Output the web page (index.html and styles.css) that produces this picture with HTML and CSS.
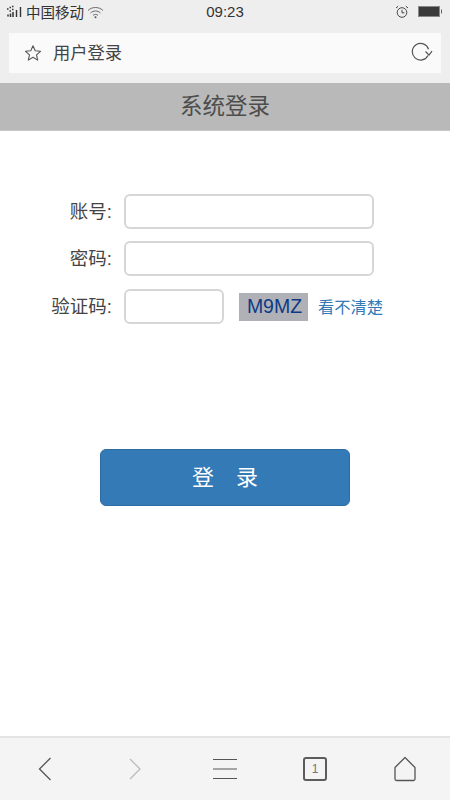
FILE: index.html
```html
<!DOCTYPE html>
<html>
<head>
    <meta charset="UTF-8" />
    <title>系统登录</title>
    <link rel="stylesheet" href="styles.css">
</head>
<body>
    <div class="browser-top">
        <div class="status-bar">
            <div class="status-left">
                <svg class="signal" width="17" height="14" viewBox="0 0 17 14">
                    <path d="M1 4h1.500M3.500 2.500h1.500M6 1.500h1.500M3.500 6h1.500M6 4.500h1.500M2 9.500v2M4.500 8.500v3.500M7 7v5" fill="none" stroke="#333" stroke-width="1.500"/>
                    <path d="M10.500 5v7M14.500 2v10" fill="none" stroke="#333" stroke-width="1.400"/>
                </svg>
                <span>中国移动</span>
                <svg class="wifi" width="17" height="14" viewBox="0 0 17 14">
                    <path d="M1 5.500C5 1.500 12 1.500 16 5.500M3.500 8C6.500 5.300 10.500 5.300 13.500 8M6 10.300c1.500-1.200 3.500-1.200 5 0" fill="none" stroke="#666" stroke-width="1"/>
                    <circle cx="8.500" cy="12.300" r="1" fill="#555"/>
                </svg>
            </div>
            <div class="status-time">09:23</div>
            <div class="status-right">
                <svg width="14" height="14" viewBox="0 0 14 14">
                    <circle cx="7" cy="7.500" r="4.800" fill="none" stroke="#444" stroke-width="1"/>
                    <path d="M7 4.800v3h2.400M1 3l2.200-1.800M13 3l-2.200-1.800" fill="none" stroke="#444" stroke-width="1"/>
                </svg>
                <svg width="25" height="12" viewBox="0 0 25 12">
                    <rect x="0.500" y="0.500" width="21" height="10" fill="#3a3a3a" stroke="#888"/>
                    <rect x="23" y="3.500" width="1" height="4" fill="#666"/>
                </svg>
            </div>
        </div>
        <div class="address-bar">
            <svg class="star" width="18" height="18" viewBox="0 0 18 18">
                <path d="M9 1.800l2.200 4.900 5.300.6-4 3.500 1.200 5.300L9 13.300l-4.700 2.800 1.200-5.300-4-3.500 5.300-.6z" fill="none" stroke="#555" stroke-width="1.100" stroke-linejoin="round"/>
            </svg>
            <span class="address-title">用户登录</span>
            <svg class="reload" width="22" height="20" viewBox="0 0 22 20">
                <path d="M17.500 7.200A8.300 8.300 0 1 0 17 13.500" fill="none" stroke="#555" stroke-width="1.200"/>
                <path d="M14.500 9.500l3.500 3.500 3-3.800" fill="none" stroke="#555" stroke-width="1.200"/>
            </svg>
        </div>
    </div>

    <div class="page-title">系统登录</div>

    <div class="content">
        <form class="login-form">
            <div class="form-row">
                <label class="form-label">账号:</label>
                <input class="form-input" type="text">
            </div>
            <div class="form-row">
                <label class="form-label">密码:</label>
                <input class="form-input" type="password">
            </div>
            <div class="form-row form-row-captcha">
                <label class="form-label">验证码:</label>
                <input class="form-input form-input-short" type="text">
                <span class="captcha">M9MZ</span>
                <a class="captcha-link" href="#">看不清楚</a>
            </div>
            <button class="login-button" type="button">登&ensp;&ensp;录</button>
        </form>
    </div>

    <div class="toolbar">
        <svg width="14" height="26" viewBox="0 0 14 26">
            <path d="M12.500 2L1.500 13l11 11" fill="none" stroke="#555" stroke-width="1.300"/>
        </svg>
        <svg width="14" height="26" viewBox="0 0 14 26">
            <path d="M2 3l10 10L2 23" fill="none" stroke="#bbb" stroke-width="1.300"/>
        </svg>
        <svg width="24" height="22" viewBox="0 0 24 22">
            <path d="M0 1.500h24M0 11h24M0 20.500h24" fill="none" stroke="#555" stroke-width="1.200"/>
        </svg>
        <div class="tab-count">1</div>
        <svg width="24" height="26" viewBox="0 0 24 26">
            <path d="M12 1.500L2 11.500V23c0 1 .7 1.500 1.500 1.500h17c.8 0 1.500-.5 1.500-1.500V11.500z" fill="none" stroke="#555" stroke-width="1.300" stroke-linejoin="round"/>
        </svg>
    </div>
</body>
</html>
```

FILE: styles.css
```css
body {
    margin: 0;
    height: 800px;
    display: flex;
    flex-direction: column;
    background-color: white;
    font-family: "Liberation Sans", "Noto Sans CJK SC", sans-serif;
    color: #333;
    overflow: hidden;
}

.browser-top {
    height: 83px;
    background-color: #eeeeee;
}

.status-bar {
    height: 33px;
    box-sizing: border-box;
    padding: 0 6px 10px;
    display: grid;
    grid-template-columns: 1fr auto 1fr;
    align-items: center;
}

.status-left {
    display: flex;
    align-items: center;
    gap: 3px;
    font-size: 14.500px;
    color: #333;
}

.status-time {
    font-size: 15px;
    color: #333;
}

.status-right {
    display: flex;
    justify-content: flex-end;
    align-items: center;
    gap: 9px;
    padding-right: 1px;
}

.address-bar {
    height: 40px;
    margin: 0 9px;
    padding: 0 8px 0 15px;
    display: flex;
    align-items: center;
    background-color: #fafafa;
}

.star {
    margin-right: 11px;
}

.address-title {
    flex: 1;
    font-size: 17.300px;
    color: #444;
    padding-bottom: 3px;
}

.reload {
    margin-bottom: 2px;
}

.page-title {
    height: 48px;
    line-height: 47px;
    text-align: center;
    font-size: 22.500px;
    color: #4d4d4d;
    background-color: #b9b9b9;
    border-bottom: 1px solid #c8c8c8;
    box-sizing: border-box;
}

.content {
    flex: 1;
}

.login-form {
    display: flex;
    flex-direction: column;
    padding-top: 63px;
}

.form-row {
    display: flex;
    align-items: center;
    height: 35px;
    margin-bottom: 12px;
}

.form-row-captcha {
    margin-top: 1px;
}

.form-label {
    width: 112px;
    margin-right: 12px;
    text-align: right;
    font-size: 18.500px;
    line-height: 26px;
    color: #444;
}

.form-input {
    width: 250px;
    height: 35px;
    padding: 0 12px;
    box-sizing: border-box;
    border: 2px solid #d6d6d6;
    border-radius: 6px;
    background-color: white;
}

.form-input-short {
    width: 100px;
}

.captcha {
    width: 69px;
    height: 28px;
    box-sizing: border-box;
    padding-left: 2px;
    line-height: 27px;
    margin-left: 15px;
    text-align: center;
    font-size: 19.500px;
    white-space: nowrap;
    color: #0d3a86;
    background-color: #b0b1b6;
}

.captcha-link {
    margin-left: 10px;
    padding-bottom: 1px;
    font-size: 16.300px;
    color: #337ab7;
    text-decoration: none;
}

.login-button {
    width: 250px;
    height: 57px;
    margin: 113px 0 0 100px;
    padding: 0 0 5px;
    font-family: inherit;
    font-size: 22px;
    color: white;
    background-color: #337ab7;
    border: 1px solid #2e6da4;
    border-radius: 6px;
    cursor: pointer;
}

.toolbar {
    height: 64px;
    box-sizing: border-box;
    display: grid;
    grid-template-columns: repeat(5, 90px);
    justify-items: center;
    align-items: center;
    background-color: #f4f4f4;
    border-top: 2px solid #e4e4e4;
}

.tab-count {
    width: 24px;
    height: 24px;
    box-sizing: border-box;
    border: 2px solid #5c5c5c;
    border-radius: 3px;
    text-align: center;
    font-size: 12px;
    line-height: 20px;
    color: #777;
}
```
